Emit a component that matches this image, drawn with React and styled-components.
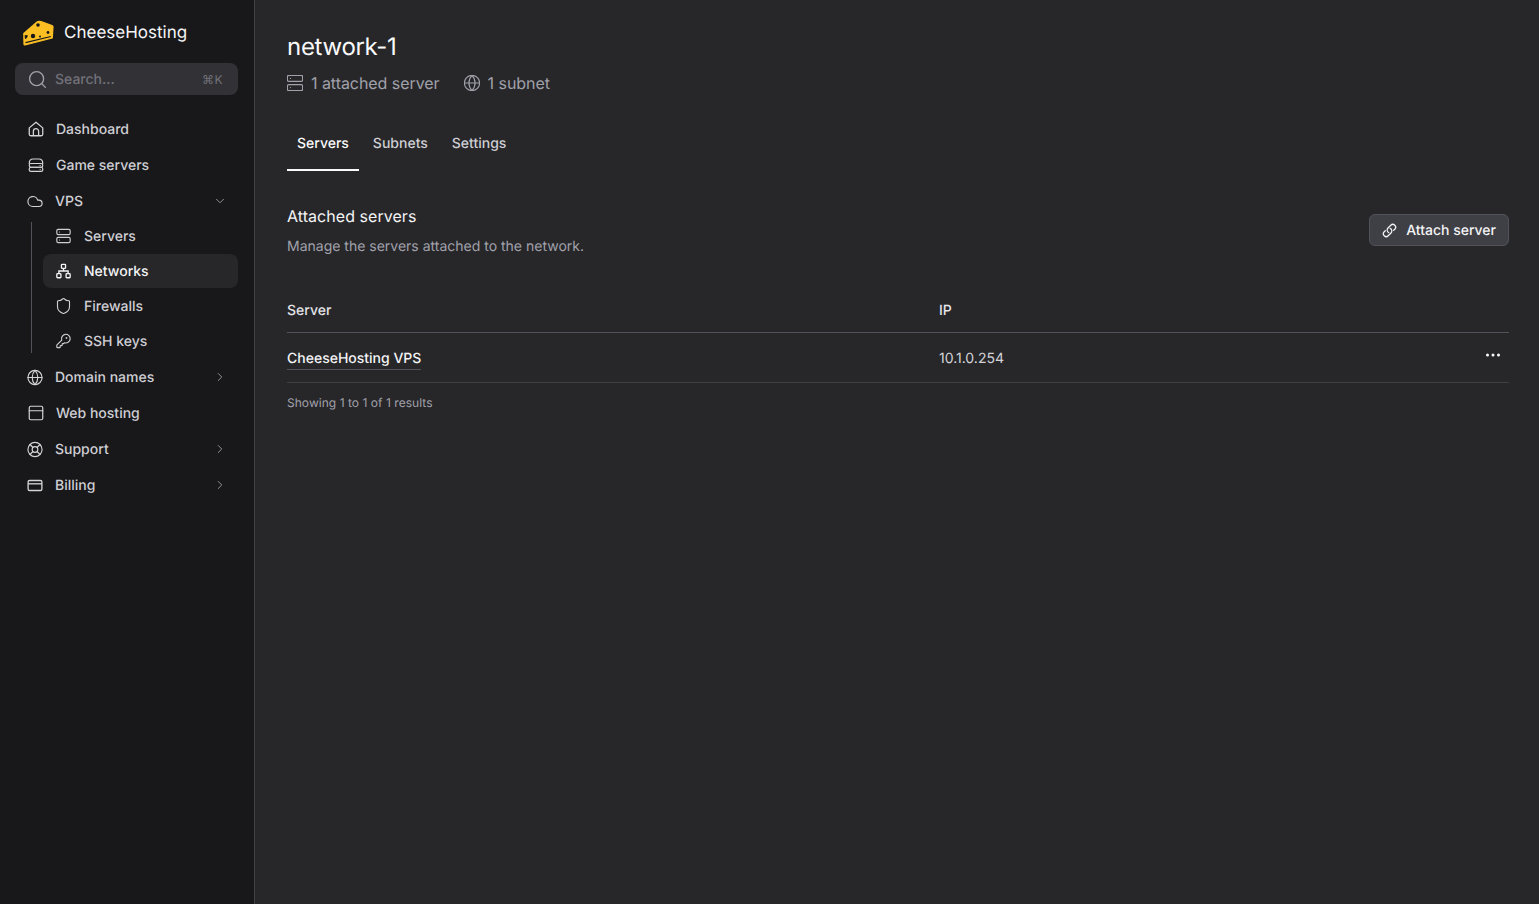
import React from 'react';
import styled, { createGlobalStyle } from 'styled-components';
import {
  Cloud,
  Globe,
  KeyRound,
  LifeBuoy,
  PanelTop,
  Search as SearchIcon,
  Server,
  Shield,
  ChevronDown,
  ChevronRight,
} from 'lucide-react';
import { HiOutlineLink, HiMiniEllipsisHorizontal } from 'react-icons/hi2';

const GlobalStyle = createGlobalStyle`
  html, body {
    margin: 0;
    height: 100%;
    background: #27272a;
    font-family: Inter, "Liberation Sans", sans-serif;
    font-size: 14px;
    text-rendering: geometricPrecision;
  }
  #root { height: 100%; }
  * { box-sizing: border-box; }
`;

const Page = styled.div`
  display: flex;
  height: 904px;
  overflow: hidden;
`;

const Sidebar = styled.aside`
  width: 255px;
  flex: none;
  background: #18181b;
  border-right: 1px solid #3f3f46;
  padding: 14px 16px 0 15px;
`;

const Brand = styled.div`
  display: flex;
  align-items: center;
  gap: 10px;
  height: 36px;
  padding: 1px 0 0 8px;
  margin-bottom: 13px;
  color: #f4f4f5;
  font-size: 17px;
  font-weight: 400;
`;

const SearchBox = styled.div`
  display: flex;
  align-items: center;
  height: 32px;
  padding: 0 15px 0 12px;
  border-radius: 8px;
  background: #323236;
  color: #71717a;
  font-weight: 500;
  margin-bottom: 16px;
  svg { color: #a1a1aa; margin-right: 7px; }
`;

const SearchHint = styled.span`
  flex: 1;
`;

const Kbd = styled.span`
  font-size: 12px;
  font-weight: 400;
  letter-spacing: 0.5px;
  color: #71717a;
`;

const NavRow = styled.div`
  display: flex;
  align-items: center;
  height: 36px;
  padding-left: ${(p) => (p.$toggle ? '10px' : '11px')};
  gap: 10px;
  color: #cfcfd4;
  font-weight: 500;
  svg.icon {
    width: 20px;
    height: ${(p) => (p.$toggle ? '17px' : '18px')};
    color: #d4d4d8;
    flex: none;
  }
`;

const Chevron = styled.span`
  margin-left: auto;
  margin-right: 11px;
  display: flex;
  color: #a1a1aa;
`;

const SubList = styled.div`
  position: relative;
  margin: 0 0 1px 28px;
  display: flex;
  flex-direction: column;
  gap: 1px;

  &::before {
    content: '';
    position: absolute;
    left: -12px;
    top: 3px;
    bottom: 5px;
    width: 1px;
    background: #52525b;
  }
`;

const SubRow = styled.div`
  display: flex;
  align-items: center;
  gap: 11px;
  height: 34px;
  padding-left: 11px;
  border-radius: 8px;
  color: ${(p) => (p.$active ? '#f4f4f5' : '#cfcfd4')};
  background: ${(p) => (p.$active ? '#27272a' : 'transparent')};
  font-weight: 500;
  svg { width: 19px; height: 16px; flex: none; }
`;

const TallShield = styled(Shield)`
  && { height: 18px; }
`;

const Main = styled.main`
  flex: 1;
  min-width: 0;
  background: #27272a;
  padding: 31px 30px 0 32px;
`;

const Title = styled.h1`
  margin: 0;
  color: #fafafa;
  font-size: 24px;
  font-weight: 400;
  line-height: 32px;
  letter-spacing: -0.3px;
`;

const Meta = styled.div`
  display: flex;
  gap: 24px;
  margin-top: 8px;
  height: 24px;
  color: #a1a1aa;
  font-size: 16px;
  letter-spacing: -0.05px;
`;

const MetaItem = styled.span`
  display: flex;
  align-items: center;
  gap: 8px;
`;

const Tabs = styled.nav`
  display: flex;
  gap: 4px;
  margin-top: 30px;
  margin-bottom: 33px;
`;

const Tab = styled.div`
  height: 46px;
  padding: 9px 10px 0;
  line-height: 20px;
  color: ${(p) => (p.$active ? '#fafafa' : '#cfcfd4')};
  font-weight: 500;
  border-bottom: 2px solid ${(p) => (p.$active ? '#fafafa' : 'transparent')};
`;

const SectionHead = styled.div`
  display: flex;
  justify-content: space-between;
  align-items: flex-start;
`;

const SectionTitle = styled.h2`
  margin: 0;
  color: #f4f4f5;
  font-size: 16px;
  font-weight: 400;
  line-height: 24px;
  letter-spacing: 0.05px;
`;

const SectionText = styled.p`
  margin: 8px 0 0;
  color: #a1a1aa;
  line-height: 22px;
`;

const Button = styled.button`
  display: flex;
  align-items: center;
  gap: 9px;
  height: 32px;
  margin-top: 10px;
  padding: 0 12px;
  border: 1px solid #52525b;
  border-radius: 6px;
  background: #3f3f46;
  color: #f4f4f5;
  font: 500 14px Inter, sans-serif;
  text-rendering: geometricPrecision;
  svg { font-size: 15px; stroke-width: 2; }
`;

const Table = styled.div`
  margin-top: 31px;
`;

const Cols = styled.div`
  display: grid;
  grid-template-columns: 652px 1fr 40px;
  align-items: center;
  height: ${(p) => p.$h};
  padding-top: ${(p) => p.$pad || '0'};
  border-bottom: 1px solid ${(p) => p.$line};
`;

const HeadCell = styled.div`
  color: #e4e4e7;
  font-weight: 500;
`;

const ServerLink = styled.span`
  color: #f4f4f5;
  font-weight: 500;
  border-bottom: 1px solid #52525b;
  padding-bottom: 2px;
`;

const IpCell = styled.div`
  color: #d4d4d8;
`;

const Actions = styled.div`
  display: flex;
  justify-content: flex-end;
  padding-right: 6px;
  margin-top: -8px;
  color: #fafafa;
  font-size: 20px;
`;

const Footer = styled.div`
  margin-top: 12px;
  color: #a1a1aa;
  font-size: 12px;
  line-height: 16px;
  letter-spacing: 0.04px;
`;

function CheeseLogo() {
  return (
    <svg width="31" height="26" viewBox="0 0 31 26">
      <path d="M0.8 13.5 L14 2 Q15.5 0.8 18 1.6 L29 5.5 Q30 6 30 7 L29.3 18 L2 25 Q1 25 1 24 Z" fill="#fbbf24" stroke="#fbbf24" strokeWidth="1.2" strokeLinejoin="round" />
      <path d="M2.5 22.7 L27.8 16.5" stroke="#18181b" strokeWidth="1.2" fill="none" />
      <path d="M1.6 15.2 L4.6 15 Q5 18 2 19 Z" fill="#18181b" />
      <circle cx="15" cy="5" r="1.8" fill="#18181b" />
      <circle cx="10" cy="16" r="2.2" fill="#18181b" />
      <circle cx="17" cy="16.5" r="1" fill="#18181b" />
      <circle cx="25" cy="12.5" r="1.4" fill="#18181b" />
    </svg>
  );
}

function HomeIcon({ className }) {
  return (
    <svg className={className} viewBox="0 0 24 24" fill="none" stroke="currentColor" strokeWidth="1.7" strokeLinejoin="round">
      <path d="M3 10.5 12 3l9 7.5V19a2 2 0 0 1-2 2H5a2 2 0 0 1-2-2z" />
      <path d="M8.5 21v-6a3.5 3.5 0 0 1 7 0v6" />
    </svg>
  );
}

function StackIcon({ className }) {
  return (
    <svg className={className} viewBox="0 0 24 24" fill="none" stroke="currentColor" strokeWidth="1.6" strokeLinecap="round">
      <path d="M3 10 Q3 4 8 4h8q5 0 5 6" />
      <rect x="3" y="10" width="18" height="5" rx="2.2" />
      <rect x="3" y="15" width="18" height="5.5" rx="2.2" />
      <path d="M17.5 12.5h.01M17.5 17.7h.01" />
    </svg>
  );
}

function NetworkIcon() {
  return (
    <svg viewBox="0 0 18 18" fill="none" stroke="currentColor" strokeWidth="1.5">
      <rect x="6.7" y="1.5" width="4.6" height="4.6" rx="0.8" />
      <rect x="1.5" y="12" width="4.6" height="4.6" rx="0.8" />
      <rect x="11.9" y="12" width="4.6" height="4.6" rx="0.8" />
      <path d="M9 6.1V9M3.8 12V9h10.4v3" />
    </svg>
  );
}

function CardIcon({ className }) {
  return (
    <svg className={className} viewBox="0 0 18 18" fill="none" stroke="currentColor" strokeWidth="1.4">
      <rect x="1.7" y="3.7" width="14.6" height="10.6" rx="1.6" />
      <path d="M1.7 7.2h14.6" />
    </svg>
  );
}

export default function App() {
  return (
    <>
      <GlobalStyle />
      <Page>
        <Sidebar>
          <Brand>
            <CheeseLogo />
            CheeseHosting
          </Brand>
          <SearchBox>
            <SearchIcon size={21} strokeWidth={1.5} />
            <SearchHint>Search...</SearchHint>
            <Kbd>⌘K</Kbd>
          </SearchBox>
          <NavRow>
            <HomeIcon className="icon" />
            Dashboard
          </NavRow>
          <NavRow>
            <StackIcon className="icon" />
            Game servers
          </NavRow>
          <NavRow $toggle>
            <Cloud className="icon" strokeWidth={1.6} />
            VPS
            <Chevron><ChevronDown size={14} strokeWidth={1.5} /></Chevron>
          </NavRow>
          <SubList>
            <SubRow><Server strokeWidth={1.7} />Servers</SubRow>
            <SubRow $active><NetworkIcon />Networks</SubRow>
            <SubRow><TallShield strokeWidth={1.5} />Firewalls</SubRow>
            <SubRow><KeyRound strokeWidth={1.7} />SSH keys</SubRow>
          </SubList>
          <NavRow $toggle>
            <Globe className="icon" strokeWidth={1.6} />
            Domain names
            <Chevron><ChevronRight size={14} strokeWidth={1.5} /></Chevron>
          </NavRow>
          <NavRow>
            <PanelTop className="icon" strokeWidth={1.6} />
            Web hosting
          </NavRow>
          <NavRow $toggle>
            <LifeBuoy className="icon" strokeWidth={1.6} />
            Support
            <Chevron><ChevronRight size={14} strokeWidth={1.5} /></Chevron>
          </NavRow>
          <NavRow $toggle>
            <CardIcon className="icon" />
            Billing
            <Chevron><ChevronRight size={14} strokeWidth={1.5} /></Chevron>
          </NavRow>
        </Sidebar>
        <Main>
          <Title>network-1</Title>
          <Meta>
            <MetaItem><Server size={16} strokeWidth={1.6} viewBox="1.5 1.5 21 21" />1 attached server</MetaItem>
            <MetaItem><Globe size={16} strokeWidth={1.5} viewBox="1.5 1.5 21 21" />1 subnet</MetaItem>
          </Meta>
          <Tabs>
            <Tab $active>Servers</Tab>
            <Tab>Subnets</Tab>
            <Tab>Settings</Tab>
          </Tabs>
          <SectionHead>
            <div>
              <SectionTitle>Attached servers</SectionTitle>
              <SectionText>Manage the servers attached to the network.</SectionText>
            </div>
            <Button><HiOutlineLink />Attach server</Button>
          </SectionHead>
          <Table>
            <Cols $h="44px" $line="#52525b">
              <HeadCell>Server</HeadCell>
              <HeadCell>IP</HeadCell>
            </Cols>
            <Cols $h="50px" $pad="2px" $line="#3f3f46">
              <div><ServerLink>CheeseHosting VPS</ServerLink></div>
              <IpCell>10.1.0.254</IpCell>
              <Actions><HiMiniEllipsisHorizontal /></Actions>
            </Cols>
          </Table>
          <Footer>Showing 1 to 1 of 1 results</Footer>
        </Main>
      </Page>
    </>
  );
}
